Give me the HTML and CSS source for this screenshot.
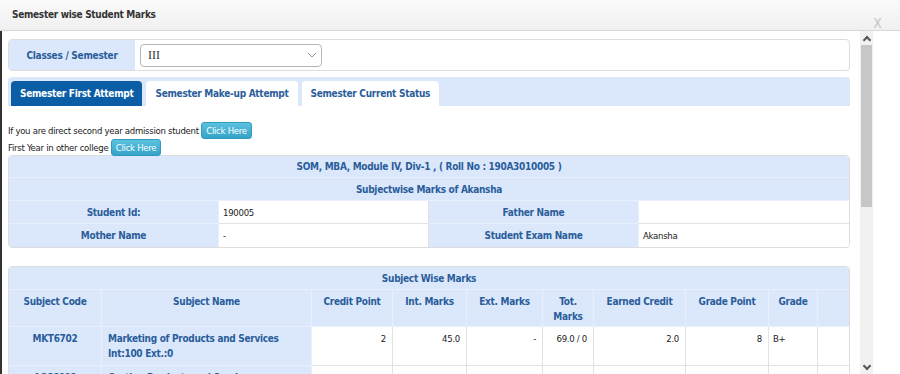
FILE: index.html
```html
<!DOCTYPE html>
<html lang="en">
<head>
	<meta charset="UTF-8">
	<title>Semester wise Student Marks</title>
	<link rel="stylesheet" href="styles.css">
</head>
<body>
	<div class="dialog">
		<div class="dialog-title">
			<span>Semester wise Student Marks</span>
			<span class="close">X</span>
		</div>
		<div class="dialog-body">
			<div class="content">
				<div class="sem-panel">
					<div class="sem-label">Classes / Semester</div>
					<div class="sem-select">
						<span>III</span>
						<svg width="10" height="6" viewBox="0 0 10 6"><path d="M1 1l4 4 4-4" fill="none" stroke="#999" stroke-width="1"/></svg>
					</div>
				</div>

				<ul class="tabs">
					<li class="active">Semester First Attempt</li>
					<li>Semester Make-up Attempt</li>
					<li>Semester Current Status</li>
				</ul>

				<div class="notes">
					<p>If you are direct second year admission student <a class="btn-info">Click Here</a></p>
					<p>First Year in other college <a class="btn-info">Click Here</a></p>
				</div>

				<table class="grid info">
					<colgroup><col style="width:210px"><col style="width:210px"><col style="width:210px"><col></colgroup>
					<tr><th colspan="4" class="head">SOM, MBA, Module IV, Div-1 , ( Roll No : 190A3010005 )</th></tr>
					<tr><th colspan="4" class="head">Subjectwise Marks of Akansha</th></tr>
					<tr><th>Student Id:</th><td>190005</td><th>Father Name</th><td></td></tr>
					<tr><th>Mother Name</th><td>-</td><th>Student Exam Name</th><td>Akansha</td></tr>
				</table>

				<table class="grid marks">
					<colgroup>
						<col style="width:93px"><col style="width:210px"><col style="width:81px"><col style="width:74px"><col style="width:76px">
						<col style="width:51px"><col style="width:92px"><col style="width:83px"><col style="width:49px"><col>
					</colgroup>
					<tr><th colspan="10" class="head">Subject Wise Marks</th></tr>
					<tr class="cols">
						<th>Subject Code</th><th>Subject Name</th><th>Credit Point</th><th>Int. Marks</th><th>Ext. Marks</th>
						<th>Tot. Marks</th><th>Earned Credit</th><th>Grade Point</th><th>Grade</th><th></th>
					</tr>
					<tr>
						<th>MKT6702</th><th class="name">Marketing of Products and Services<br>Int:100 Ext.:0</th>
						<td class="num">2</td><td class="num">45.0</td><td class="num">-</td><td class="num">69.0 / 0</td>
						<td class="num">2.0</td><td class="num">8</td><td>B+</td><td></td>
					</tr>
					<tr>
						<th>ACC6002</th><th class="name">Costing Products and Services<br>Int:100 Ext.:0</th>
						<td class="num">3</td><td class="num">47.75</td><td class="num">-</td><td class="num">71.0 / 0</td>
						<td class="num">3.0</td><td class="num">7</td><td>B</td><td></td>
					</tr>
				</table>
			</div>
			<div class="scrollbar">
				<div class="arrow up"></div>
				<div class="thumb"></div>
				<div class="arrow down"></div>
			</div>
		</div>
	</div>
</body>
</html>
```

FILE: styles.css
```css
* {
	margin:0;
	padding:0;
	box-sizing:border-box;
}
html,body {
	height:100%;
	overflow:hidden;
}
body {
	font-family:"DejaVu Sans Condensed","DejaVu Sans",sans-serif;
	font-stretch:semi-condensed;
	font-size:9.5px;
	letter-spacing:-0.28px;
	color:#222;
	background:#fff;
}
ul {
	list-style:none;
}
.dialog {
	height:100%;
	display:flex;
	flex-direction:column;
}
.dialog-title {
	height:31px;
	display:flex;
	justify-content:space-between;
	padding:0 0 0 12px;
	background:linear-gradient(#fafafa,#f0f0f0);
	border-bottom:1px solid #d6d6d6;
	font-size:10px;
	font-weight:bold;
	letter-spacing:-0.3px;
	color:#333;
	line-height:30px;
}
.close {
	font-family:"DejaVu Sans",sans-serif;
	font-weight:normal;
	font-size:14px;
	letter-spacing:0;
	color:#c4c4c4;
	padding:7px 18px 0 0;
	line-height:32px;
}
.dialog-body {
	flex:1;
	display:flex;
	min-height:0;
	border-left:2px solid #333;
}
.content {
	width:858px;
	padding:8px 10px 0 6px;
	overflow:hidden;
}
.scrollbar {
	width:13px;
	display:flex;
	flex-direction:column;
	background:#f1f1f1;
}
.scrollbar .thumb {
	height:162px;
	margin:0 1px;
	background:#c7c7c7;
}
.scrollbar .arrow {
	height:14px;
	position:relative;
}
.scrollbar .down {
	margin-top:auto;
}
.scrollbar .arrow:after {
	content:"";
	position:absolute;
	left:4px;
	width:4px;
	height:4px;
	border:solid #555;
	border-width:2px 0 0 2px;
}
.scrollbar .up:after {
	top:6px;
	transform:rotate(45deg);
}
.scrollbar .down:after {
	top:3px;
	transform:rotate(-135deg);
}

/* classes / semester */
.sem-panel {
	height:32px;
	display:flex;
	align-items:center;
	border:1px solid #ddd;
	border-radius:4px;
	overflow:hidden;
}
.sem-label {
	width:126px;
	height:100%;
	display:flex;
	align-items:center;
	justify-content:center;
	background:#dbe8fb;
	color:#2a5d9a;
	font-size:10px;
	font-weight:bold;
	letter-spacing:-0.25px;
}
.sem-select {
	width:182px;
	height:23px;
	margin-left:5px;
	display:flex;
	align-items:center;
	justify-content:space-between;
	padding:0 4px 0 7px;
	border:1px solid #b5b5b5;
	border-radius:4px;
	font-family:"Liberation Serif",serif;
	font-size:12px;
	letter-spacing:0;
	color:#333;
}

/* tabs */
.tabs {
	margin-top:6px;
	height:29px;
	display:flex;
	gap:4px;
	padding:4px 3px 0;
	background:#dbe8fb;
	border-radius:4px 4px 0 0;
}
.tabs li {
	padding:0 9px;
	background:#fff;
	color:#2a5d9a;
	font-size:10px;
	font-weight:bold;
	letter-spacing:-0.28px;
	line-height:25px;
	border-radius:4px 4px 0 0;
}
.tabs li.active {
	background:#0b5ea6;
	color:#fff;
}

/* notes */
.notes {
	padding-top:16px;
	line-height:17px;
}
.btn-info {
	display:inline-block;
	height:17px;
	padding:0 4px;
	line-height:16px;
	color:#fff;
	background:linear-gradient(#5bc2e0,#35a3c8);
	border:1px solid #2f9bc0;
	border-radius:3px;
	vertical-align:top;
}

/* tables */
.grid {
	width:842px;
	table-layout:fixed;
	border-collapse:separate;
	border-spacing:0;
	border:1px solid #ddd;
	border-radius:4px;
	overflow:hidden;
}
.grid th {
	background:#dbe8fb;
	color:#2a5d9a;
	font-size:10px;
	font-weight:bold;
	letter-spacing:-0.3px;
	border-right:1px solid #e9f0fb;
	border-bottom:1px solid #e9f0fb;
}
.grid td {
	background:#fff;
	border-right:1px solid #e2e2e2;
	border-bottom:1px solid #e2e2e2;
	padding:0 4px;
}
.grid tr:last-child th,
.grid tr:last-child td {
	border-bottom:0;
}
.grid th:last-child,
.grid td:last-child {
	border-right:0;
}
.info {
	margin-top:-1px;
}
.info th,
.info td {
	height:23px;
}
.info tr:first-child th {
	height:22px;
}
.marks {
	margin-top:18px;
}
.marks th,
.marks td {
	vertical-align:top;
	line-height:15px;
	padding-top:4px;
	padding-bottom:4px;
}
.marks .cols th {
	height:37px;
	padding:4px 4px 0;
}
.marks .head {
	height:23px;
	vertical-align:middle;
	padding:0;
}
.marks .name {
	text-align:left;
	padding-left:6px;
}
.marks .num {
	text-align:right;
	padding-right:6px;
}
```
